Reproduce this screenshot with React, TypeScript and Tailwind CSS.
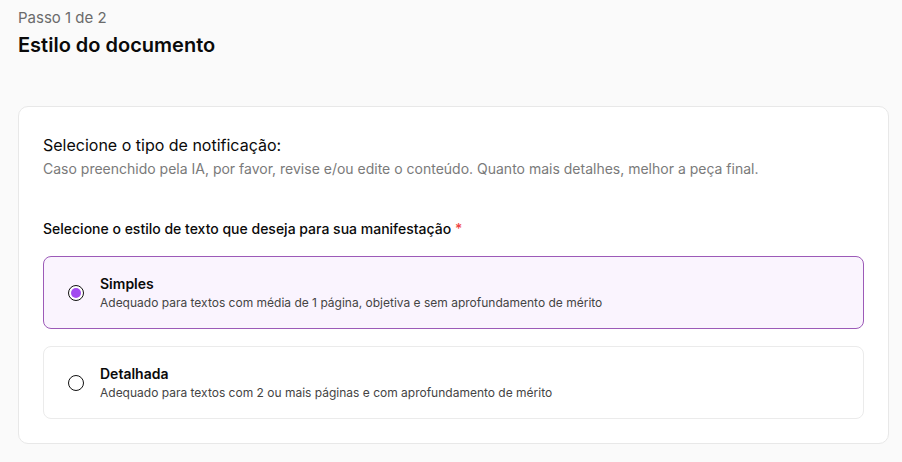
import { useState } from "react";

const OPTIONS = [
  {
    value: "simples",
    title: "Simples",
    description: "Adequado para textos com média de 1 página, objetiva e sem aprofundamento de mérito",
  },
  {
    value: "detalhada",
    title: "Detalhada",
    description: "Adequado para textos com 2 ou mais páginas e com aprofundamento de mérito",
  },
];

export default function App() {
  const [style, setStyle] = useState("simples");

  return (
    <div className="min-h-screen bg-[#fafafa] pl-[18px] pr-[13px] pt-[7px] pb-[18px] text-[#0a0a0a] font-['Inter',sans-serif]">
      {/* Header */}
      <p className="text-[15px] leading-[22px] text-[#6b6b6b]">Passo 1 de 2</p>
      <h1 className="mt-[2px] text-[20px] leading-[28px] font-semibold">Estilo do documento</h1>

      {/* Card */}
      <div className="mt-[47px] rounded-[10px] border border-[#e8e8e8] bg-white px-[24px] pt-[26px] pb-[24px]">
        <h2 className="text-[16px] leading-[24px]">Selecione o tipo de notificação:</h2>
        <p className="mt-[2px] text-[14px] leading-[20px] text-[#7a7a7a]">
          Caso preenchido pela IA, por favor, revise e/ou edite o conteúdo. Quanto mais detalhes, melhor a peça final.
        </p>

        <label className="mt-[40px] block text-[14px] leading-[20px] font-medium">
          Selecione o estilo de texto que deseja para sua manifestação{" "}
          <span className="text-[#ef4444]">*</span>
        </label>

        <div className="mt-[17px] flex flex-col gap-[17px]">
          {OPTIONS.map((opt) => {
            const active = style === opt.value;
            return (
              <button
                key={opt.value}
                onClick={() => setStyle(opt.value)}
                className={`flex h-[73px] w-full items-center gap-[16px] rounded-[8px] border px-[24px] text-left ${
                  active ? "border-[#9c5ab8] bg-[#faf4fe]" : "border-[#ebebeb] bg-white"
                }`}
              >
                <span className="flex h-[16px] w-[16px] shrink-0 items-center justify-center rounded-full border-[1.5px] border-[#111] bg-white">
                  {active && <span className="h-[10px] w-[10px] rounded-full bg-[#a24bf0]" />}
                </span>
                <span className="flex flex-col">
                  <span className="text-[14px] leading-[20px] font-semibold">{opt.title}</span>
                  <span className="text-[12px] leading-[18px] text-[#444]">{opt.description}</span>
                </span>
              </button>
            );
          })}
        </div>
      </div>
    </div>
  );
}
